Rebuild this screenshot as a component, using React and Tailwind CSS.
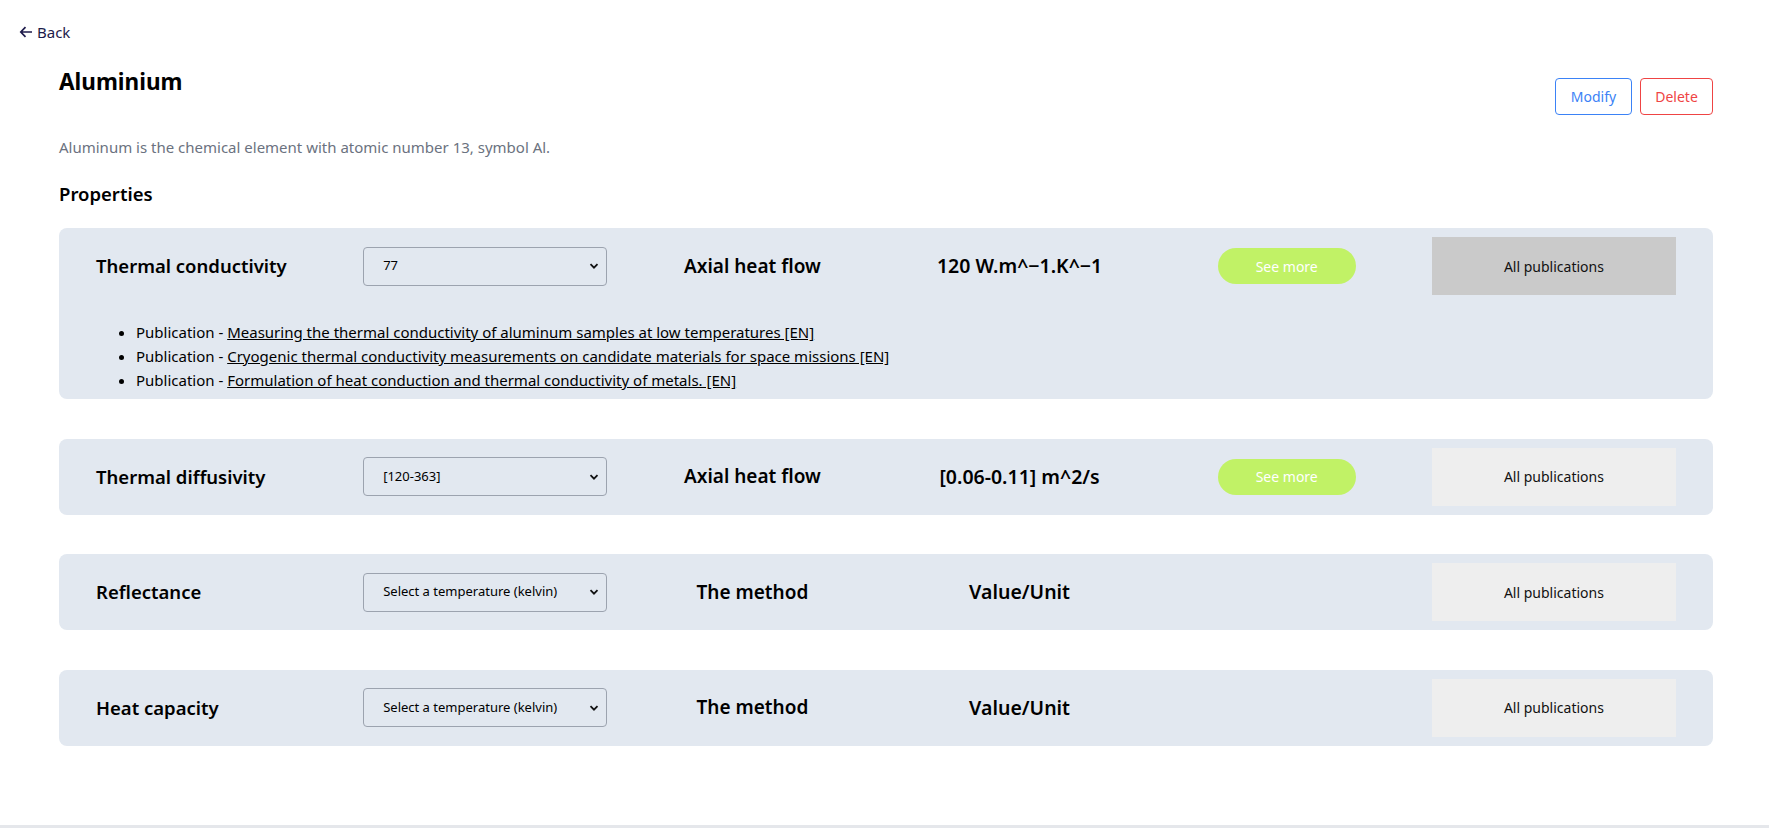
import React from 'react'

const properties = [
  {
    name: 'Thermal conductivity',
    temperature: '77',
    method: 'Axial heat flow',
    value: '120 W.m^−1.K^−1',
    seeMore: true,
    active: true,
    publications: [
      'Measuring the thermal conductivity of aluminum samples at low temperatures [EN]',
      'Cryogenic thermal conductivity measurements on candidate materials for space missions [EN]',
      'Formulation of heat conduction and thermal conductivity of metals. [EN]',
    ],
  },
  {
    name: 'Thermal diffusivity',
    temperature: '[120-363]',
    method: 'Axial heat flow',
    value: '[0.06-0.11] m^2/s',
    seeMore: true,
  },
  {
    name: 'Reflectance',
    temperature: 'Select a temperature (kelvin)',
    method: 'The method',
    value: 'Value/Unit',
  },
  {
    name: 'Heat capacity',
    temperature: 'Select a temperature (kelvin)',
    method: 'The method',
    value: 'Value/Unit',
  },
]

const Chevron = () => (
  <svg width="10" height="10" viewBox="0 0 10 10" className="absolute right-[8px] top-1/2 -translate-y-1/2 pointer-events-none">
    <path d="M1.5 3.2 L5 6.7 L8.5 3.2" fill="none" stroke="#111" strokeWidth="1.8" />
  </svg>
)

const PropertyCard = ({ prop }) => {
  return (
    <div className="bg-[#e2e8f0] rounded-[8px] pt-[9px] pb-[9px] mb-[39.5px]">
      <div className="grid grid-cols-6 gap-x-[23px] items-center px-[37px]">
        <div className="text-[18.5px] font-semibold text-black">{prop.name}</div>

        <div className="relative">
          <select
            defaultValue={prop.temperature}
            className="w-full h-[39px] appearance-none bg-transparent border border-[#9ca3af] rounded-[4px] pl-[19px] text-[13px] text-black"
          >
            <option>{prop.temperature}</option>
          </select>
          <Chevron />
        </div>

        <div className="text-center text-[19px] font-semibold text-black">{prop.method}</div>
        <div className="text-center text-[19.5px] font-semibold text-black">{prop.value}</div>

        <div className="flex justify-center">
          {prop.seeMore && (
            <button className="w-[138px] h-[36px] rounded-full bg-[#c1f266] text-white text-[14px]">
              See more
            </button>
          )}
        </div>

        <button
          className={`w-full h-[58px] text-[14px] text-[#111] ${prop.active ? 'bg-[#cacaca]' : 'bg-[#eeeeee]'}`}
        >
          All publications
        </button>
      </div>

      {prop.publications && (
        <ul className="list-disc pl-[77px] mt-[25px] -mb-[2px] text-[15px] leading-[24px] text-black">
          {prop.publications.map((pub) => (
            <li key={pub}>
              Publication - <a href="#" className="underline">{pub}</a>
            </li>
          ))}
        </ul>
      )}
    </div>
  )
}

export default function App() {
  return (
    <div className="min-h-screen flex flex-col bg-white font-['Noto_Sans',sans-serif]">
      <div className="pl-[19px] pt-[20px]">
        <a href="#" className="inline-flex items-center gap-[4px] text-[15px] leading-[24px] text-[#1e1b4b]">
          <svg width="14" height="14" viewBox="0 0 14 14">
            <path d="M13 7 H1.8 M6.5 2.2 L1.8 7 L6.5 11.8" fill="none" stroke="#1e1b4b" strokeWidth="1.7" />
          </svg>
          Back
        </a>
      </div>

      <div className="pl-[59px] pr-[56px]">
        <div className="flex justify-between items-start mt-[21px]">
          <h1 className="text-[22.5px] leading-[32px] font-bold text-black">Aluminium</h1>
          <div className="flex gap-[8px] mt-[12px]">
            <button className="w-[77px] h-[37px] border border-[#3b82f6] rounded-[4px] text-[14px] text-[#3b82f6]">
              Modify
            </button>
            <button className="w-[73px] h-[37px] border border-[#ef4444] rounded-[4px] text-[14px] text-[#ef4444]">
              Delete
            </button>
          </div>
        </div>

        <p className="mt-[20px] text-[15px] leading-[24px] text-[#6b7280]">
          Aluminum is the chemical element with atomic number 13, symbol Al.
        </p>

        <h2 className="mt-[21px] text-[18.5px] leading-[28px] font-semibold text-black">Properties</h2>

        <div className="mt-[20px]">
          {properties.map((prop) => (
            <PropertyCard key={prop.name} prop={prop} />
          ))}
        </div>
      </div>

      <div className="mt-auto h-[3px] bg-[#e5e7eb]" />
    </div>
  )
}
